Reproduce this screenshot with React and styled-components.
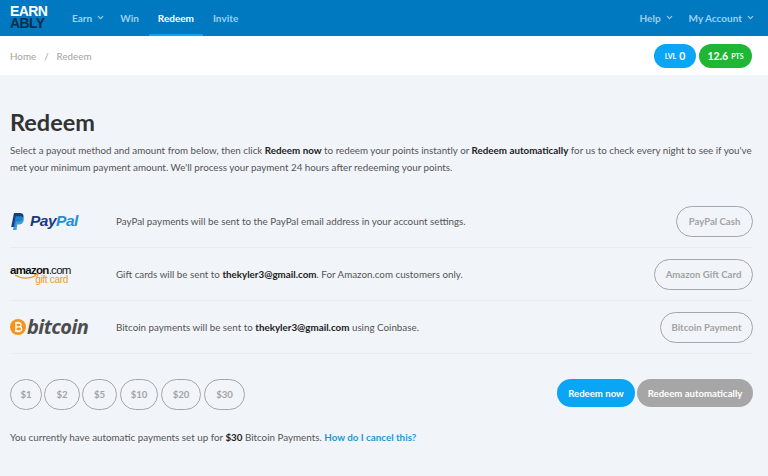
import React from 'react';
import styled, { createGlobalStyle } from 'styled-components';
import { ChevronDown } from 'lucide-react';

const Global = createGlobalStyle`
  html, body { margin: 0; padding: 0; background: #f1f4f9; }
  body { font-family: Lato, "Liberation Sans", sans-serif; overflow: hidden; }
  * { box-sizing: border-box; }
`;

const Page = styled.div`
  width: 768px;
  height: 476px;
  overflow: hidden;
  background: #f1f4f9;
`;

const TopBar = styled.header`
  height: 36px;
  background: #0079c1;
  display: flex;
  align-items: stretch;
  padding: 0 4px 0 10px;
`;

const Logo = styled.div`
  width: 38px;
  margin-right: 15px;
  padding-top: 5px;
  font-family: "Liberation Sans", sans-serif;
  font-weight: 700;
  font-size: 14px;
  line-height: 12px;
  letter-spacing: -0.6px;
  color: #fff;
  & span { display: block; color: #0a2d4e; }
`;

const NavItem = styled.a`
  display: flex;
  align-items: center;
  gap: 4px;
  font-size: 10px;
  font-weight: 700;
  color: ${p => (p.$active ? '#fff' : '#9fd0ee')};
  padding: 1px 9px 0;
  margin-right: ${p => p.$gap || 0}px;
  border-bottom: 2px solid ${p => (p.$active ? '#0ba5f5' : 'transparent')};
`;

const Spacer = styled.div`
  flex: 1;
`;

const Crumbs = styled.div`
  height: 39px;
  background: #fff;
  display: flex;
  align-items: center;
  padding: 0 16px 0 10px;
  font-size: 9.8px;
  color: #a3a3a3;
  gap: 8px;
`;

const Pill = styled.div`
  height: 24px;
  border-radius: 12px;
  background: ${p => p.$bg};
  color: #fff;
  display: flex;
  align-items: center;
  justify-content: center;
  gap: 3px;
  width: ${p => p.$w}px;
  margin-left: ${p => p.$ml || 0}px;
  font-size: 7px;
  font-weight: 700;
  & b { font-size: 10.5px; font-weight: 700; }
`;

const Main = styled.main`
  padding: 32px 15px 0 10px;
`;

const Title = styled.h1`
  margin: 0 0 5px;
  font-size: 23.5px;
  line-height: 30px;
  font-weight: 700;
  color: #333;
`;

const Intro = styled.p`
  margin: 0 0 19px;
  font-size: 9.8px;
  line-height: 17px;
  color: #555;
  & b { color: #222; font-weight: 700; }
`;

const Row = styled.div`
  height: 53px;
  display: flex;
  align-items: center;
  border-bottom: 1px solid #e9ecf1;
`;

const LogoCell = styled.div`
  width: 106px;
  flex: none;
`;

const RowText = styled.div`
  flex: 1;
  font-size: 9.8px;
  color: #555;
  padding-bottom: 1px;
  & b { color: #222; font-weight: 700; }
`;

const OutlineBtn = styled.button`
  height: 31px;
  border: 1.5px solid #a6a6a6;
  border-radius: 15.5px;
  background: transparent;
  color: #a3a3a3;
  font: 700 9.6px Lato, sans-serif;
  padding: 0;
  width: ${p => p.$w}px;
  flex: none;
`;

const LogoFlex = styled.div`
  display: flex;
  align-items: center;
  gap: ${p => p.$gap}px;
`;

const PayPalWord = styled.span`
  font: italic 700 15.5px "Liberation Sans", sans-serif;
  color: #1b3a7e;
  letter-spacing: -0.5px;
  & i { color: #1f8fd6; }
`;

const AmazonStack = styled.div`
  font-family: "Liberation Sans", sans-serif;
  width: 58px;
  position: relative;
  & svg { position: absolute; left: 4px; top: 9px; }
`;

const AmazonWord = styled.div`
  font-size: 11.5px;
  line-height: 10px;
  font-weight: 700;
  letter-spacing: -0.7px;
  color: #111;
  & span { font-weight: 400; }
`;

const GiftCard = styled.div`
  font-size: 10px;
  line-height: 9px;
  color: #f39a26;
  text-align: right;
  letter-spacing: -0.3px;
`;

const BitcoinWord = styled.span`
  font: italic 700 20px "Open Sans", sans-serif;
  line-height: 20px;
  color: #4d4d4d;
  letter-spacing: -0.6px;
`;

const Actions = styled.div`
  display: flex;
  align-items: flex-start;
  margin-top: 25px;
`;

const Amount = styled.button`
  height: 31px;
  width: ${p => p.$w}px;
  margin-right: ${p => p.$mr}px;
  border: 1.5px solid #a6a6a6;
  border-radius: 15.5px;
  background: transparent;
  color: #a3a3a3;
  font: 700 9.6px Lato, sans-serif;
  padding: 0;
`;

const Solid = styled.button`
  height: 28px;
  width: ${p => p.$w}px;
  margin-left: ${p => p.$ml || 0}px;
  border: none;
  border-radius: 14px;
  background: ${p => p.$bg};
  color: #fff;
  font: 700 9.6px Lato, sans-serif;
  padding: 0;
`;

const Note = styled.p`
  margin: 20px 0 0;
  font-size: 9.8px;
  line-height: 14px;
  color: #555;
  & b { color: #222; font-weight: 700; }
  & a { color: #1a9ad6; font-weight: 700; }
`;

const PayPalMark = () => (
  <svg width="15" height="17" viewBox="0 0 15 17">
    <path d="M4 0h5.5C12.5 0 14 1.6 13.5 4.2 13 7.2 11 8.8 8 8.8H6L5 14H1.2z" fill="#1b3a7e" />
    <path d="M5.6 3.2h5.6c1.8.3 3 1.7 2.6 4-.5 2.8-2.5 4.3-5 4.3H7.3L6.5 17H3z" fill="#1f8fd6" opacity="0.85" />
  </svg>
);

const AmazonSmile = () => (
  <svg width="26" height="6" viewBox="0 0 26 6">
    <path d="M1 1c6 4 15 4 21 .5" fill="none" stroke="#f39a26" strokeWidth="1.2" />
    <path d="M20 .6l4-.4-1.4 3.4" fill="none" stroke="#f39a26" strokeWidth="1" />
  </svg>
);

const BitcoinMark = () => (
  <svg width="16" height="16" viewBox="0 0 16 16">
    <circle cx="8" cy="8" r="8" fill="#f7931a" />
    <path
      d="M6 3.8v8.4M6 4h3.2c1.2 0 1.9.8 1.9 1.9S10.4 7.8 9.2 7.8H6M6 7.8h3.6c1.3 0 2 .9 2 2s-.8 2.2-2 2.2H6M5 4h1.2M5 12h1.2M7.4 2.8v1.2M9 2.8v1.2M7.4 12v1.2M9 12v1.2"
      fill="none"
      stroke="#fff"
      strokeWidth="1.3"
    />
  </svg>
);

const methods = [
  {
    id: 'paypal',
    logo: <LogoFlex $gap={5}><PayPalMark /><PayPalWord>Pay<i>Pal</i></PayPalWord></LogoFlex>,
    text: <>PayPal payments will be sent to the PayPal email address in your account settings.</>,
    label: 'PayPal Cash',
    w: 77,
  },
  {
    id: 'amazon',
    logo: (
      <AmazonStack>
        <AmazonWord>amazon<span>.com</span></AmazonWord>
        <AmazonSmile />
        <GiftCard>gift card</GiftCard>
      </AmazonStack>
    ),
    text: <>Gift cards will be sent to <b>thekyler3@gmail.com</b>. For Amazon.com customers only.</>,
    label: 'Amazon Gift Card',
    w: 99,
  },
  {
    id: 'bitcoin',
    logo: <LogoFlex $gap={1}><BitcoinMark /><BitcoinWord>bitcoin</BitcoinWord></LogoFlex>,
    text: <>Bitcoin payments will be sent to <b>thekyler3@gmail.com</b> using Coinbase.</>,
    label: 'Bitcoin Payment',
    w: 93,
  },
];

const amounts = [['$1', 32, 2], ['$2', 36, 2], ['$5', 35, 3], ['$10', 38, 3], ['$20', 40, 3], ['$30', 41, 0]];

export default function App() {
  return (
    <Page>
      <Global />
      <TopBar>
        <Logo>EARN<span>ABLY</span></Logo>
        <NavItem $gap={-3}>Earn <ChevronDown size={9} strokeWidth={3} /></NavItem>
        <NavItem $gap={1}>Win</NavItem>
        <NavItem $active $gap={1}>Redeem</NavItem>
        <NavItem>Invite</NavItem>
        <Spacer />
        <NavItem $gap={-3}>Help <ChevronDown size={9} strokeWidth={3} /></NavItem>
        <NavItem>My Account <ChevronDown size={9} strokeWidth={3} /></NavItem>
      </TopBar>
      <Crumbs>
        <span>Home</span><span>/</span><span>Redeem</span>
        <Spacer />
        <Pill $bg="#0ba5f5" $w={42}>LVL <b>0</b></Pill>
        <Pill $bg="#1fb636" $w={53} $ml={-5}><b>12.6</b> PTS</Pill>
      </Crumbs>
      <Main>
        <Title>Redeem</Title>
        <Intro>
          Select a payout method and amount from below, then click <b>Redeem now</b> to redeem your points instantly or <b>Redeem automatically</b> for us to check every night to see if you've met your minimum payment amount. We'll process your payment 24 hours after redeeming your points.
        </Intro>
        {methods.map(m => (
          <Row key={m.id}>
            <LogoCell>{m.logo}</LogoCell>
            <RowText>{m.text}</RowText>
            <OutlineBtn $w={m.w}>{m.label}</OutlineBtn>
          </Row>
        ))}
        <Actions>
          {amounts.map(([a, w, mr]) => <Amount key={a} $w={w} $mr={mr}>{a}</Amount>)}
          <Spacer />
          <Solid $bg="#0ba5f5" $w={78}>Redeem now</Solid>
          <Solid $bg="#a6a6a6" $w={116} $ml={2}>Redeem automatically</Solid>
        </Actions>
        <Note>
          You currently have automatic payments set up for <b>$30</b> Bitcoin Payments. <a>How do I cancel this?</a>
        </Note>
      </Main>
    </Page>
  );
}
